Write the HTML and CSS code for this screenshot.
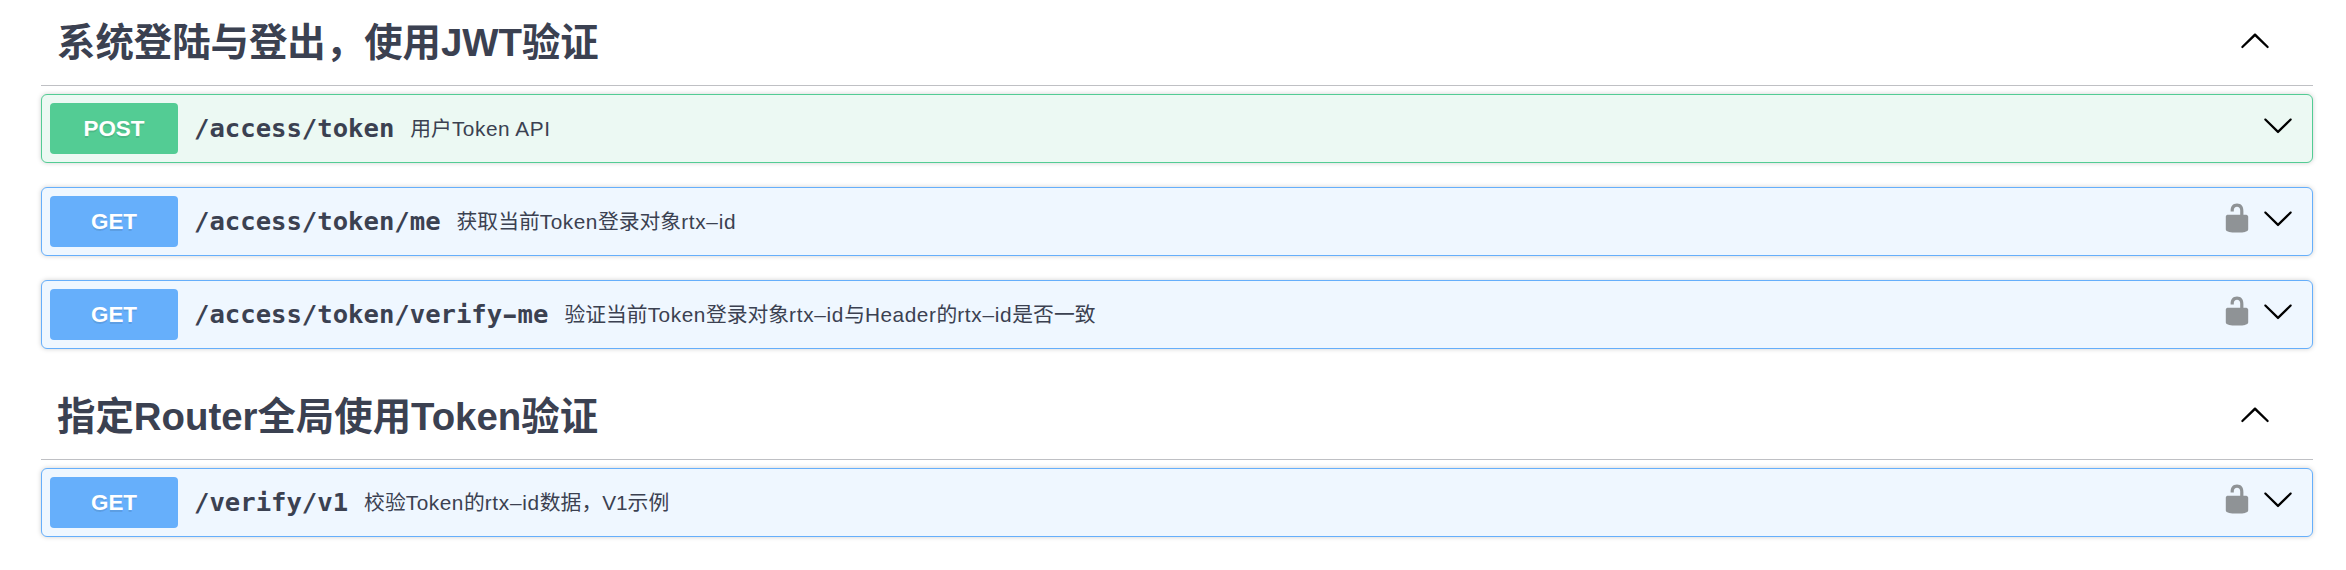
FILE: index.html
```html
<!DOCTYPE html>
<html lang="zh-CN">
<head>
<meta charset="utf-8">
<title>API</title>
<link rel="stylesheet" href="styles.css">
</head>
<body>
<svg class="defs" width="0" height="0">
  <symbol id="up" viewBox="0 0 20 20"><path d="M17.418 14.908c.272.268.709.268.979 0s.271-.701 0-.969l-7.908-7.83c-.27-.268-.707-.268-.979 0l-7.908 7.83c-.27.268-.27.701 0 .969.271.268.709.268.979 0L10 7.767l7.418 7.141z"/></symbol>
  <symbol id="down" viewBox="0 0 20 20"><path d="M17.418 6.109c.272-.268.709-.268.979 0s.271.701 0 .969l-7.908 7.83c-.27.268-.707.268-.979 0l-7.908-7.83c-.27-.268-.27-.701 0-.969.271-.268.709-.268.979 0L10 13.25l7.418-7.141z"/></symbol>
  <symbol id="unlocked" viewBox="0 0 20 20"><path d="M15.8 8H14V5.6C14 2.703 12.665 1 10 1 7.334 1 6 2.703 6 5.6V6h2v-.801C8 3.754 8.797 3 10 3c1.203 0 2 .754 2 2.199V8H4c-.553 0-1 .646-1 1.199V17c0 .549.428 1.139.951 1.307l1.197.387C5.672 18.861 6.55 19 7.1 19h5.8c.549 0 1.428-.139 1.951-.307l1.196-.387c.524-.167.953-.757.953-1.306V9.199C17 8.646 16.352 8 15.8 8z"/></symbol>
</svg>
<main class="api">
  <section class="tag">
    <header class="tag-head"><h3 class="tag-title">系统登陆与登出，使用JWT验证</h3><svg class="icon"><use href="#up"/></svg></header>
    <div class="ops">
      <div class="op post"><span class="method">POST</span><span class="path">/access/token</span><span class="summary">用户<span class="latin">Token API</span></span><svg class="icon"><use href="#down"/></svg></div>
      <div class="op get"><span class="method">GET</span><span class="path">/access/token/me</span><span class="summary">获取当前<span class="latin">Token</span>登录对象<span class="latin ident">rtx–id</span></span><svg class="icon lock"><use href="#unlocked"/></svg><svg class="icon"><use href="#down"/></svg></div>
      <div class="op get"><span class="method">GET</span><span class="path">/access/token/verify<span class="dash">-</span>me</span><span class="summary">验证当前<span class="latin">Token</span>登录对象<span class="latin ident">rtx–id</span>与<span class="latin">Header</span>的<span class="latin ident">rtx–id</span>是否一致</span><svg class="icon lock"><use href="#unlocked"/></svg><svg class="icon"><use href="#down"/></svg></div>
    </div>
  </section>
  <section class="tag">
    <header class="tag-head"><h3 class="tag-title">指定Router全局使用Token验证</h3><svg class="icon"><use href="#up"/></svg></header>
    <div class="ops">
      <div class="op get"><span class="method">GET</span><span class="path">/verify/v1</span><span class="summary">校验<span class="latin">Token</span>的<span class="latin ident">rtx–id</span>数据，V1示例</span><svg class="icon lock"><use href="#unlocked"/></svg><svg class="icon"><use href="#down"/></svg></div>
    </div>
  </section>
</main>
</body>
</html>
```
FILE: styles.css
```css
* { box-sizing: border-box; }
body {
  margin: 0;
  background: #fff;
  color: #3b4151;
  font-family: "Liberation Sans", "Noto Sans CJK SC", sans-serif;
}
.defs { display: block; height: 0; }
.api { padding: 0 33px 0 41px; }
.tag { margin-bottom: 25px; }
.tag-head {
  display: flex;
  align-items: center;
  justify-content: space-between;
  height: 86px;
  padding: 0 42px 5px 16px;
  border-bottom: 1px solid #bfc0c4;
}
.tag-title {
  margin: 0;
  padding-top: 5px;
  font-size: 38.4px;
  line-height: 48px;
  font-weight: 700;
  white-space: nowrap;
}
.ops { padding-top: 8px; }
.op {
  display: flex;
  align-items: center;
  height: 69px;
  margin-bottom: 24px;
  padding: 0 18px 0 8px;
  border: 1px solid;
  border-radius: 6px;
  box-shadow: 0 0 5px rgba(0, 0, 0, .19);
}
.post { border-color: #53cc94; background: #ecf9f3; }
.get { border-color: #66affb; background: #eff7ff; }
.method {
  width: 128px;
  height: 51px;
  border-radius: 4px;
  color: #fff;
  font-size: 22.4px;
  font-weight: 700;
  line-height: 51px;
  text-align: center;
  text-shadow: 0 2px 0 rgba(0, 0, 0, .1);
}
.post .method { background: #53cc94; }
.get .method { background: #66affb; }
.path {
  padding: 0 16px 1px;
  font-family: "DejaVu Sans Mono", monospace;
  font-size: 25.6px;
  font-weight: 700;
  white-space: nowrap;
}
.dash { display: inline-block; transform: scaleX(1.5); }
.summary {
  flex: 1;
  font-size: 20.8px;
  line-height: 30px;
  white-space: nowrap;
}
.latin { letter-spacing: .55px; }
.ident { letter-spacing: .7px; }
.icon { display: block; width: 32px; height: 32px; flex: none; fill: #000; }
.op .icon { margin: 0 0 7px; }
.op .lock { margin-right: 9px; fill: #8f9396; }
```
